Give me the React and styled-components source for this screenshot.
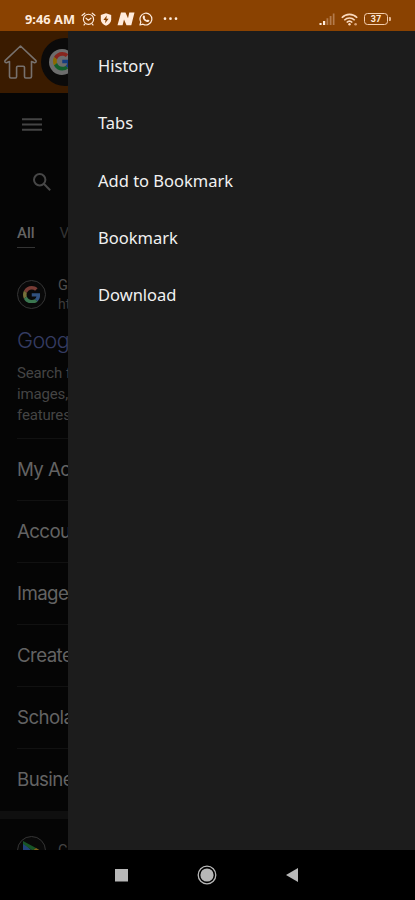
import React from "react";
import styled, { createGlobalStyle } from "styled-components";

const GlobalStyle = createGlobalStyle`
  * { box-sizing: border-box; }
  body { margin: 0; background: #000; }
`;

const Phone = styled.div`
  display: grid;
  grid-template-rows: 31px 819px 50px;
  width: 415px;
  height: 900px;
  overflow: hidden;
  background: #000;
  font-family: "Noto Sans", sans-serif;
`;

const StatusBar = styled.header`
  display: flex;
  align-items: center;
  padding: 7px 24px 0 25px;
  background: #8a4201;
  color: #ffebdc;
  svg { display: block; flex: none; }
`;

const Clock = styled.span`
  width: 50px;
  margin-right: 6px;
  font: 700 12.8px/18px "Noto Sans", sans-serif;
  letter-spacing: 0.03px;
  white-space: nowrap;
`;

const StatusIcons = styled.div`
  display: flex;
  align-items: center;
  gap: ${(p) => p.$gap}px;
  margin-left: ${(p) => (p.$end ? "auto" : "0")};
`;

const MoreDots = styled.div`
  padding-left: 10px;
`;

const Battery = styled.div`
  display: flex;
  align-items: center;
`;

const BatteryBody = styled.span`
  width: 24px;
  height: 12px;
  border: 1.5px solid #f5cfb0;
  border-width: 1px 1.5px;
  border-radius: 3.5px;
  text-align: center;
  font: 700 9px/10px Roboto, sans-serif;
`;

const BatteryTip = styled.span`
  width: 2px;
  height: 4px;
  margin-left: 1px;
  border-radius: 0 1px 1px 0;
  background: #e3b48e;
`;

const Content = styled.main`
  display: grid;
  grid-template-columns: 68px 1fr;
  overflow: hidden;
`;

const DimmedPage = styled.section`
  display: flex;
  flex-direction: column;
  overflow: hidden;
  white-space: nowrap;
  background: #050505;
  font-family: Roboto, sans-serif;
  svg { display: block; flex: none; }
`;

const Toolbar = styled.div`
  display: flex;
  align-items: center;
  flex: none;
  height: 62px;
  padding-left: 4px;
  gap: 4px;
  background: #3a1b00;
`;

const LogoDisc = styled.div`
  display: flex;
  align-items: center;
  justify-content: center;
  flex: none;
  width: 48px;
  height: 48px;
  margin-top: -1px;
  border-radius: 50%;
  background: #0b0a0a;
`;

const LogoPlate = styled.div`
  display: flex;
  align-items: center;
  justify-content: center;
  width: 26px;
  height: 26px;
  margin-left: -6px;
  border-radius: 50%;
  background: #6d6d6d;
`;

const MenuRow = styled.div`
  flex: none;
  height: 63px;
  padding: 25px 0 0 22px;
`;

const SearchRow = styled.div`
  flex: none;
  height: 62px;
  margin-left: 12px;
  padding: 17px 0 0 21px;
`;

const TabRow = styled.div`
  display: flex;
  flex: none;
  gap: 25px;
  height: 52px;
  padding-left: 17px;
  font-size: 15px;
  line-height: 31px;
`;

const Tab = styled.span`
  height: 30px;
  color: ${(p) => (p.$active ? "#646464" : "#333")};
  font-weight: ${(p) => (p.$active ? 500 : 400)};
  border-bottom: 1px solid ${(p) => (p.$active ? "#343434" : "transparent")};
`;

const ResultHead = styled.div`
  display: flex;
  flex: none;
  align-items: center;
  gap: 12px;
  height: 52px;
  padding: 0 0 3px 17px;
`;

const SiteIcon = styled.div`
  display: flex;
  align-items: center;
  justify-content: center;
  flex: none;
  width: 29px;
  height: 29px;
  border: 1px solid #353535;
  border-radius: 50%;
  background: #090909;
`;

const SiteText = styled.div`
  display: flex;
  flex-direction: column;
  color: #4d4d4d;
  font-size: 14.5px;
  line-height: 19px;
`;

const SiteUrl = styled.span`
  color: #3c3c3c;
  font-size: 14px;
`;

const ResultTitle = styled.div`
  flex: none;
  height: 41px;
  padding-left: 17px;
  color: #343b61;
  font: 300 21.5px/36px Inter, sans-serif;
  letter-spacing: -0.6px;
`;

const Snippet = styled.p`
  flex: none;
  height: 75px;
  margin: 0;
  padding-left: 17px;
  color: #444;
  font-size: 15px;
  line-height: 21px;
  letter-spacing: -0.15px;
`;

const LinkRow = styled.div`
  flex: none;
  height: 62px;
  margin-left: 17px;
  border-top: 1px solid #111;
  color: #636363;
  font: 400 18.7px/62px Inter, sans-serif;
  letter-spacing: -0.6px;
`;

const Divider = styled.div`
  flex: none;
  height: 8px;
  margin-top: 1px;
  background: #0f0f0f;
`;

const NextResult = styled.div`
  display: flex;
  flex: none;
  gap: 12px;
  padding: 17px 0 0 17px;
  color: #444;
  font-size: 14.5px;
  line-height: 30px;
`;

const Drawer = styled.nav`
  display: flex;
  flex-direction: column;
  padding: 6px 0 0 30px;
  background: #1c1c1c;
`;

const DrawerItem = styled.a`
  height: 57.3px;
  color: #f1f1f1;
  font: 400 16.5px/57px "Noto Sans", sans-serif;
  white-space: nowrap;
`;

const NavBar = styled.footer`
  display: grid;
  grid-template-columns: 13px 20px 13px;
  justify-content: start;
  align-items: center;
  column-gap: 69px;
  padding: 0 0 0 115px;
  background: #000;
  svg { display: block; }
`;

const GoogleG = ({ size, dim }) => (
  <svg width={size} height={size} viewBox="0 0 48 48">
    <path fill={dim ? "#783c35" : "#87251d"} d="M24 9.5c3.54 0 6.71 1.22 9.21 3.6l6.85-6.85C35.9 2.38 30.47 0 24 0 14.62 0 6.51 5.38 2.56 13.22l7.98 6.19C12.43 13.72 17.74 9.5 24 9.5z" />
    <path fill={dim ? "#31517e" : "#153d80"} d="M46.98 24.55c0-1.57-.15-3.09-.38-4.55H24v9.02h12.94c-.58 2.96-2.26 5.48-4.78 7.18l7.73 6c4.51-4.18 7.09-10.36 7.09-17.65z" />
    <path fill={dim ? "#77713a" : "#8a6a00"} d="M10.53 28.59c-.48-1.45-.76-2.99-.76-4.59s.27-3.14.76-4.59l-7.98-6.19C.92 16.46 0 20.12 0 24s.92 7.54 2.56 10.78l7.97-6.19z" />
    <path fill={dim ? "#3b7750" : "#125f2b"} d="M24 48c6.48 0 11.93-2.13 15.89-5.81l-7.73-6c-2.15 1.45-4.92 2.3-8.16 2.3-6.26 0-11.57-4.22-13.47-9.91l-7.98 6.19C6.51 42.62 14.62 48 24 48z" />
  </svg>
);

const HomeIcon = () => (
  <svg width="33" height="34" viewBox="0 0 33 34" fill="none" stroke="#77716d" strokeWidth="1.6" strokeLinejoin="round">
    <path d="M16.5 1 1.3 15.3Q.5 16.2 1.2 17.2 2 18 3 17.5L5.5 16.5V31.5Q5.5 33 7 33H11.5Q12.6 33 12.6 31.5V22.5Q12.6 21.3 13.8 21.3H19.3Q20.5 21.3 20.5 22.5V31.5Q20.5 33 21.7 33H26Q27.5 33 27.5 31.5V16.5L30 17.5Q31 18 31.8 17.2 32.5 16.2 31.7 15.3Z" />
  </svg>
);

const AlarmIcon = () => (
  <svg width="15" height="14" viewBox="0 0 15 14" fill="none" stroke="currentColor" strokeWidth="1.15" strokeLinecap="round">
    <circle cx="7.5" cy="7.3" r="5.1" />
    <path d="M1 3.5 3.8 1.2M14 3.5 11.2 1.2M5 6.2 7.4 8.3 10 6.2M3.8 12.2 3 13M11.2 12.2 12 13" />
  </svg>
);

const ShieldIcon = () => (
  <svg width="12" height="13" viewBox="0 0 12 13">
    <path fill="currentColor" d="M6 .3 11.2 2V6.5C11.2 9.4 9 11.7 6 12.8 3 11.7.8 9.4.8 6.5V2Z" />
    <path fill="#8a4201" d="M6.8 2.6 3.4 7H5.5L5.1 10.2 8.6 5.7H6.4Z" />
  </svg>
);

const NewsIcon = () => (
  <svg width="18" height="14" viewBox="0 0 18 14">
    <path fill="currentColor" d="M4 .5H8.5L11 6.2 12.3.5H17.5L14.3 13.3H9.5L7 7.6 5.6 13.3H.5Z" />
  </svg>
);

const ChatIcon = () => (
  <svg width="14" height="14" viewBox="0 0 14 14" fill="none">
    <path stroke="currentColor" strokeWidth="1.2" strokeLinejoin="round" d="M1 13 1.8 10A5.9 5.9 0 1 1 4 12.2Z" />
    <path fill="currentColor" d="M4.5 3.6 5.4 3.5 6.2 5.2 5.6 6.1C6.1 7.1 6.8 7.8 7.9 8.3L8.8 7.5 10.4 8.3C10.4 9.7 9.2 10.3 8 10 5.8 9.4 4.3 7.8 3.8 6 3.6 5 3.8 4.1 4.5 3.6Z" />
  </svg>
);

const DotsIcon = () => (
  <svg width="15" height="4" viewBox="0 0 15 4" fill="currentColor">
    <circle cx="2" cy="1.7" r="1.35" />
    <circle cx="7.5" cy="1.7" r="1.35" />
    <circle cx="13" cy="1.7" r="1.35" />
  </svg>
);

const SignalIcon = () => (
  <svg width="16" height="12" viewBox="0 0 16 12">
    <path fill="#ffebdc" d="M.5 10H2.6V12H.5ZM4 8H6.2V12H4Z" />
    <path fill="#b37b4c" d="M7.5 5.3H9.3V12H7.5ZM10.7 3H12.5V12H10.7ZM13.8.5H15.5V12H13.8Z" />
  </svg>
);

const WifiIcon = () => (
  <svg width="17" height="13" viewBox="0 0 17 13" fill="none" stroke="#fbd9bd" strokeWidth="1.6">
    <path d="M.8 4.8C5.2.2 11.8.2 16.2 4.8M3.3 7.2C6.3 4.2 10.7 4.2 13.7 7.2M5.7 9.5C7.4 7.9 9.6 7.9 11.3 9.5" />
    <circle cx="8.5" cy="11.3" r="1.2" fill="#fbd9bd" stroke="none" />
    <circle cx="14.6" cy="11.3" r="1.3" fill="#d9a276" stroke="none" />
  </svg>
);

const PlayIcon = () => (
  <svg width="20" height="20" viewBox="0 0 20 20">
    <path fill="#22427a" d="M1 1V19L10 10Z" />
    <path fill="#175527" d="M1 0 14 7 10.5 9.5 1 3Z" />
    <path fill="#80651a" d="M10 10 14 7 19 10 13.5 13.5Z" />
    <path fill="#702820" d="M1 19 10 10 13.5 13.5Z" />
  </svg>
);

const MENU = ["History", "Tabs", "Add to Bookmark", "Bookmark", "Download"];
const LINKS = ["My Acc", "Accou", "Image", "Create", "Schola", "Busine"];

export default function App() {
  return (
    <Phone>
      <GlobalStyle />
      <StatusBar>
        <Clock>9:46 AM</Clock>
        <StatusIcons $gap={4.3}>
          <AlarmIcon />
          <ShieldIcon />
          <NewsIcon />
          <ChatIcon />
        </StatusIcons>
        <MoreDots>
          <DotsIcon />
        </MoreDots>
        <StatusIcons $gap={6} $end>
          <SignalIcon />
          <WifiIcon />
          <Battery>
            <BatteryBody>37</BatteryBody>
            <BatteryTip />
          </Battery>
        </StatusIcons>
      </StatusBar>
      <Content>
        <DimmedPage>
          <Toolbar>
            <HomeIcon />
            <LogoDisc>
              <LogoPlate>
                <GoogleG size={18.5} />
              </LogoPlate>
            </LogoDisc>
          </Toolbar>
          <MenuRow>
            <svg width="20" height="13" viewBox="0 0 20 13" fill="#444">
              <path d="M0 .3H20V2.3H0ZM0 5.5H20V7.5H0ZM0 10.8H20V12.8H0Z" />
            </svg>
          </MenuRow>
          <SearchRow>
            <svg width="18" height="18" viewBox="0 0 18 18" fill="none" stroke="#474747" strokeWidth="2">
              <circle cx="6.7" cy="6.7" r="5.7" />
              <path d="M10.8 10.8 17.2 17.2" />
            </svg>
          </SearchRow>
          <TabRow>
            <Tab $active>All</Tab>
            <Tab>V</Tab>
          </TabRow>
          <ResultHead>
            <SiteIcon>
              <GoogleG size={17.5} dim />
            </SiteIcon>
            <SiteText>
              <span>G</span>
              <SiteUrl>ht</SiteUrl>
            </SiteText>
          </ResultHead>
          <ResultTitle>Goog</ResultTitle>
          <Snippet>
            Search f<br />
            images,<br />
            features
          </Snippet>
          {LINKS.map((t) => (
            <LinkRow key={t}>{t}</LinkRow>
          ))}
          <Divider />
          <NextResult>
            <SiteIcon>
              <PlayIcon />
            </SiteIcon>
            <span>G</span>
          </NextResult>
        </DimmedPage>
        <Drawer>
          {MENU.map((t) => (
            <DrawerItem key={t}>{t}</DrawerItem>
          ))}
        </Drawer>
      </Content>
      <NavBar>
        <svg width="13" height="13" viewBox="0 0 13 13">
          <rect width="13" height="12.5" fill="#b8b8b8" />
        </svg>
        <svg width="20" height="20" viewBox="0 0 20 20">
          <circle cx="10" cy="10" r="8.8" fill="none" stroke="#b8b8b8" strokeWidth="1.3" />
          <circle cx="10" cy="10" r="6.6" fill="#b8b8b8" />
        </svg>
        <svg width="13" height="14" viewBox="0 0 13 14">
          <path d="M0 7 12 0V14Z" fill="#b8b8b8" />
        </svg>
      </NavBar>
    </Phone>
  );
}
